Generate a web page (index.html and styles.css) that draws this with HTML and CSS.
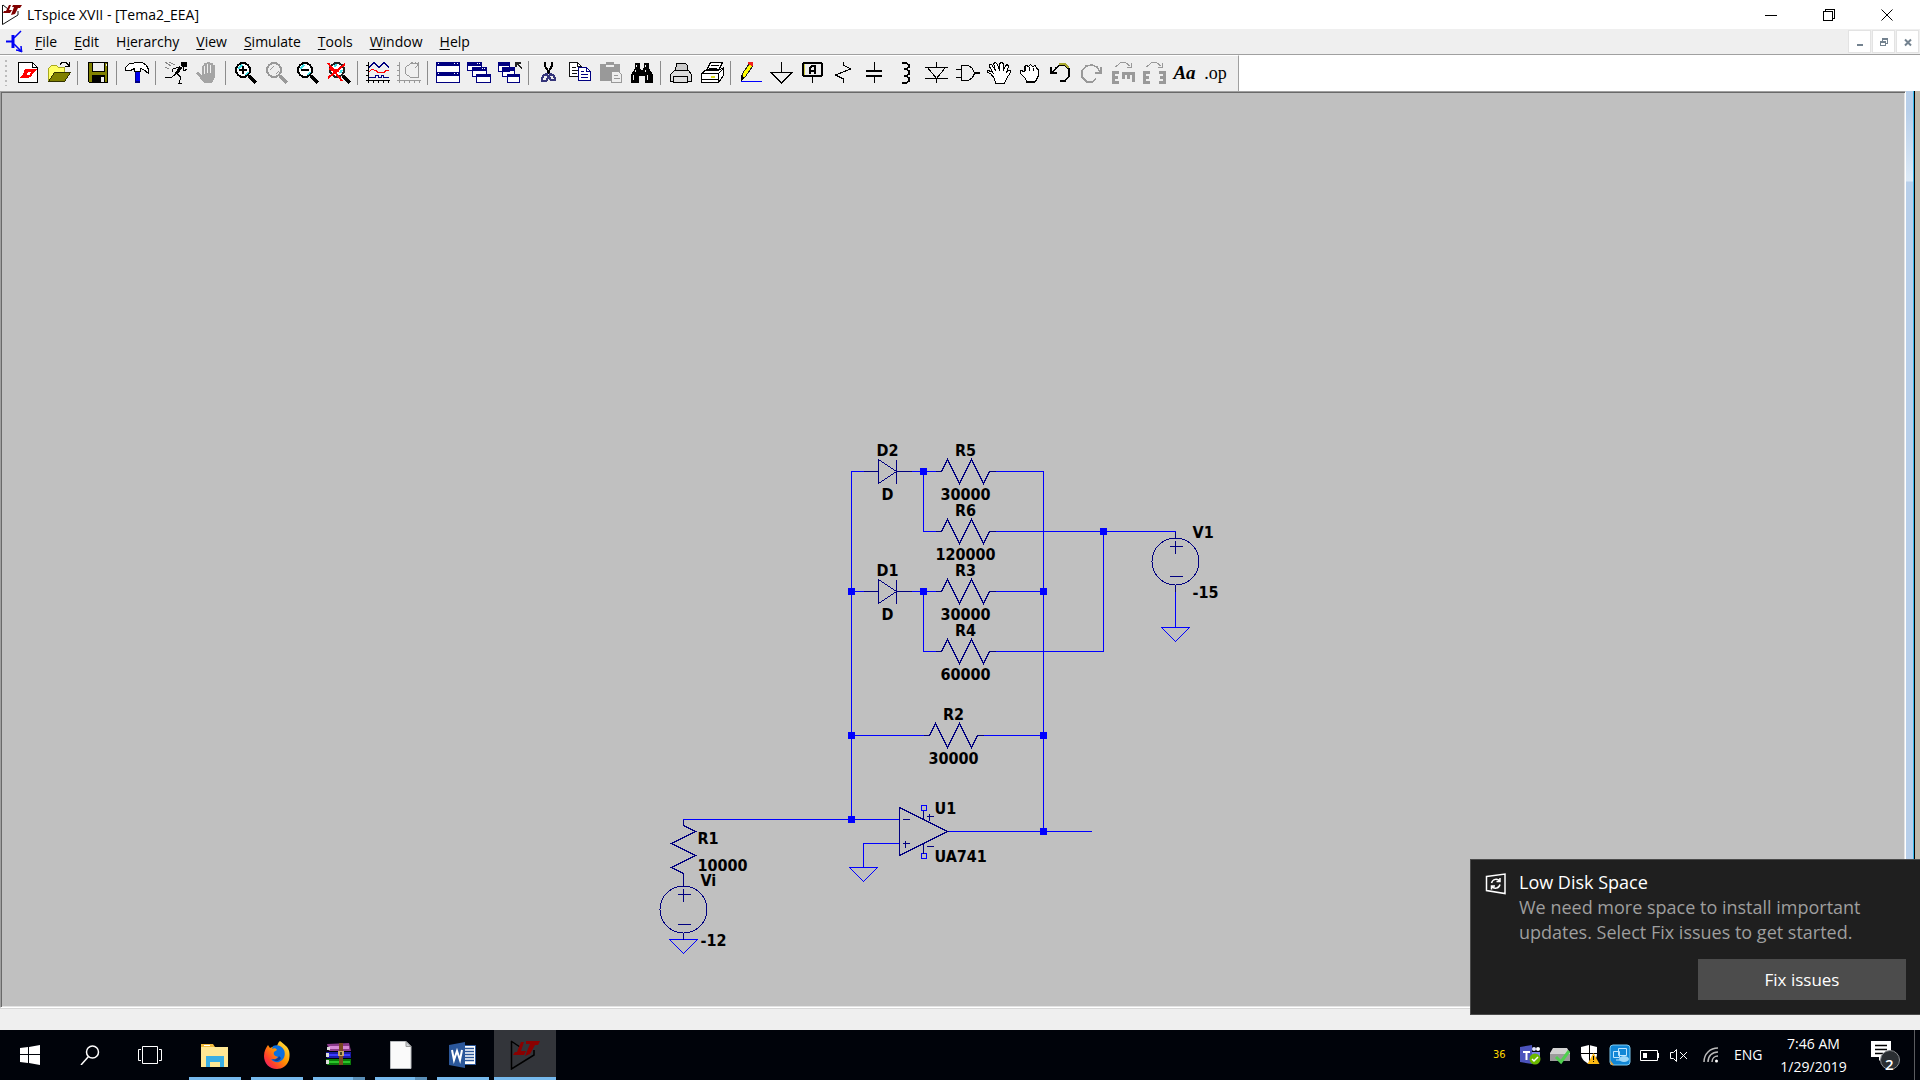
FILE: index.html
```html
<!DOCTYPE html>
<html lang="en">
<head>
<meta charset="utf-8">
<title>LTspice XVII - [Tema2_EEA]</title>
<link rel="stylesheet" href="styles.css">
</head>
<body>
<svg class="defs" aria-hidden="true">
  <defs>
    <g id="resistor"><path d="M0 0h6l6-12 12 24 12-24 12 24 6-12h6"/></g>
    <g id="diode"><path d="M0 0h15M15-12v24L33 0zM33-12v24M33 0h15"/></g>
    <g id="source"><circle cx="0" cy="30" r="23.5"/><path d="M0 0v6M-6 15h13M0 9v13M-6 45h13M0 54v6"/></g>
    <path id="ground" d="M-14 0h28L0 14z"/>
    <rect id="node" x="-3.5" y="-3.5" width="7" height="7"/>
    <g id="ltmark">
      <path fill="#800000" d="M8 1h2L8 6h3l-2 3H2l1-2h2zM12 1h9l-2 3h-2l-3 6-4 1 3-8h-2z"/>
    </g>
  </defs>
</svg>

<div class="app">
  <header class="titlebar">
    <svg class="appicon" width="22" height="22" viewBox="0 0 22 22"><path d="M1.500 1v19.500L17 11V7M2 1l5 4" fill="none" stroke="#111"/><use href="#ltmark"/></svg>
    <h1 class="title">LTspice XVII - [Tema2_EEA]</h1>
    <div class="winbtns">
      <button aria-label="Minimize"><svg width="12" height="12" viewBox="0 0 12 12"><path d="M0 6.500h12"/></svg></button>
      <button aria-label="Restore"><svg width="12" height="12" viewBox="0 0 12 12"><path d="M.5 2.500h9v9h-9zM2.500 2.500v-2h9v9h-2"/></svg></button>
      <button aria-label="Close"><svg width="12" height="12" viewBox="0 0 12 12"><path class="aa" d="M.5.5l11 11M11.500.5l-11 11"/></svg></button>
    </div>
  </header>

  <nav class="menubar">
    <svg class="docicon" width="18" height="24" viewBox="0 0 18 24" fill="none" stroke="#0000f5"><path d="M0 11.500h6" stroke-width="2"/><path d="M7 5v13" stroke-width="3"/><path d="M8 8l7-7M8 14l6 6" stroke-width="1.500"/><path d="M10 20h5v-4l1 6z" fill="#0000f5"/></svg>
    <button><u>F</u>ile</button>
    <button><u>E</u>dit</button>
    <button>H<u>i</u>erarchy</button>
    <button><u>V</u>iew</button>
    <button><u>S</u>imulate</button>
    <button><u>T</u>ools</button>
    <button><u>W</u>indow</button>
    <button><u>H</u>elp</button>
    <div class="mdibtns">
      <button aria-label="Minimize document"><svg width="10" height="10" viewBox="0 0 10 10"><path d="M2 8h6" stroke-width="2"/></svg></button>
      <button aria-label="Restore document"><svg width="10" height="10" viewBox="0 0 10 10"><path d="M3 2h6M1 5h6" stroke-width="2"/><path d="M3.500 1v3M8.500 1v5.500h-2M1.500 4v4.500h5v-4"/></svg></button>
      <button aria-label="Close document"><svg width="10" height="10" viewBox="0 0 10 10"><path class="aa" d="M2 2.500l6 6M8 2.500l-6 6" stroke-width="2"/></svg></button>
    </div>
  </nav>

  <div class="toolrow">
    <div class="toolbar" role="toolbar">
      <span class="grip"></span>
      <button aria-label="New schematic"><svg viewBox="0 0 24 24"><path fill="#fff" stroke="#000" d="M2.500 1.500h14l5 5v15h-19z"/><path fill="none" stroke="#000" d="M16.500 1.500v5h5"/><path fill="#f00" d="M9 8h4l-2 6h4l-3 3H3l3-3h1zM13 8h8l-3 3-4 6-1-1 2-5h-3z"/></svg></button>
      <button aria-label="Open"><svg viewBox="0 0 24 24"><path fill="#ff6" stroke="#a8a820" d="M1.500 20V7.500l3-3h5l2 2h6v5"/><path fill="#808000" stroke="#333300" d="M1.500 20.500l6-9h16l-6 9z"/><path fill="none" stroke="#000" d="M13 3.500l2-2h4l3 3M22.500 1v4.500H18"/></svg></button>
      <span class="sep"></span>
      <button aria-label="Save"><svg viewBox="0 0 24 24"><path fill="#808000" stroke="#000" d="M2.500 1.500h19v20h-18l-1-1z"/><path fill="#efefef" stroke="#000" d="M6.500 1.500h12v9h-12z"/><path fill="#000" d="M6 14h13v8H6z"/><path fill="#efefef" d="M15 16h3v5h-3zM20 3h1v2h-1z"/></svg></button>
      <span class="sep"></span>
      <button aria-label="Control panel"><svg viewBox="0 0 24 24"><path fill="#0000f0" d="M10 9h5v13h-5z"/><path fill="#000080" d="M10 9h1v13h-1zM10 20h5v2h-5z"/><path fill="#fff" stroke="#000" d="M.5 6.500l4-4h3l3-1h7l4 3 2 4v4l-5-4-3-1v3h-6v-3l-4 2h-5z"/></svg></button>
      <span class="sep"></span>
      <button aria-label="Run"><svg viewBox="0 0 24 24" fill="none" stroke="#000"><path fill="#000" d="M17 1h5v4h-4z"/><path stroke-width="3" d="M17 6l-5 7"/><path d="M19 6l1 4 3-2M15 6l-6 2-1 3M12 13l-4 3H1M13 13l4 3-2 6h3"/><path stroke="#888" d="M1 1l6 4M5 1l6 3M1 6l4 2"/></svg></button>
      <button aria-label="Halt"><svg viewBox="0 0 24 24"><path fill="#a4a4a4" d="M1 12l2-1 4 3V5l2-1V2l3 0V1h3v1l3 0v2h2v12l-3 6H9z"/><path stroke="#efefef" d="M9.500 5v8M12.500 3v9M15.500 4v8"/></svg></button>
      <span class="sep"></span>
      <button aria-label="Zoom in"><svg viewBox="0 0 24 24"><circle cx="9" cy="9" r="7" fill="#fff" stroke="#000" stroke-width="2"/><path fill="none" stroke="#3ee0e8" stroke-width="1.500" d="M4 8l4-4M12 14l2-3"/><path fill="none" stroke="#000" stroke-width="2" d="M5 9h8M9 5v8"/><path stroke="#000" stroke-width="3" d="M15 15l7 7"/></svg></button>
      <button aria-label="Pan"><svg viewBox="0 0 24 24"><circle cx="9" cy="9" r="7" fill="#eee" stroke="#999" stroke-width="2"/><path stroke="#999" fill="none" d="M5 9l4-4M11 13l3-3"/><path stroke="#999" stroke-width="3" d="M15 15l7 7"/></svg></button>
      <button aria-label="Zoom out"><svg viewBox="0 0 24 24"><circle cx="9" cy="9" r="7" fill="#fff" stroke="#000" stroke-width="2"/><path fill="none" stroke="#3ee0e8" stroke-width="1.500" d="M4 8l4-4M12 14l2-3"/><path fill="none" stroke="#000" stroke-width="2" d="M5 9h8"/><path stroke="#000" stroke-width="3" d="M15 15l7 7"/></svg></button>
      <button aria-label="Zoom to fit"><svg viewBox="0 0 24 24"><circle cx="10" cy="9" r="7" fill="#fff" stroke="#222" stroke-width="2"/><path fill="none" stroke="#3ee0e8" stroke-width="2" d="M7 5l3-1M13 12l2-3"/><path stroke="#000" stroke-width="3" d="M16 15l7 7"/><path fill="none" stroke="#f00" stroke-width="2" d="M1 2l14 18M18 3L1 17M2 8l10 2"/></svg></button>
      <span class="sep"></span>
      <button aria-label="Waveform"><svg viewBox="0 0 24 24" fill="none" stroke="#000"><path d="M2.500 1v21M0 19.500h24M0 4.500h3M0 9.500h3M0 14.500h3M7.500 19v3M12.500 19v3M17.500 19v3M22.500 19v3"/><path stroke="#000080" d="M3 6.500l5-5 5 5 5-5 5 5M3 16.500h6v-2h3v2h3v-2h2v2h6"/><path stroke="#f00" d="M3 10.500l3-2 4 1 2 2h6l2-2h3"/></svg></button>
      <button aria-label="FFT"><svg class="dim" viewBox="0 0 24 24"><path d="M2.500 1v21M0 19.500h24M0 4.500h3M0 9.500h3M0 14.500h3M7.500 19v3M12.500 19v3M17.500 19v3M22.500 19v3M21.500 1v16M21 2.500h-7l-6 4v6l6 4h7M18 1l3 3-3 3M12 4l4-3"/></svg></button>
      <span class="sep"></span>
      <button aria-label="Tile"><svg viewBox="0 0 24 24"><path fill="#fff" stroke="#000080" d="M.5 1.500h23v10H.5zM.5 12.500h23v9H.5z"/><path fill="#000080" d="M0 1h24v4H0zM0 11h24v4H0z"/><path fill="#fff" d="M2 2h1v1H2zM18 2h1v1h-1zM21 2h1v1h-1zM2 12h1v1H2zM18 12h1v1h-1zM21 12h1v1h-1z"/></svg></button>
      <button aria-label="Cascade"><svg viewBox="0 0 24 24"><g fill="#fff" stroke="#000080"><path d="M.5 1.500h14v8H.5zM5.500 6.500h14v9h-14zM9.500 13.500h14v8h-14z"/></g><path fill="#000080" d="M0 1h15v4H0zM5 6h15v4H5zM9 13h15v3H9z"/><path fill="#fff" d="M10 2h1v1h-1zM12 2h1v1h-1zM15 7h1v1h-1zM17 7h1v1h-1z"/></svg></button>
      <button aria-label="Close all"><svg viewBox="0 0 24 24"><g fill="#fff" stroke="#000080"><path d="M.5 1.500h11v9H.5zM4.500 6.500h12v9h-12zM9.500 13.500h12v8h-12z"/></g><path fill="#000080" d="M0 1h12v4H0zM4 6h13v4H4zM9 13h13v3H9z"/><path fill="none" stroke="#222" stroke-width="1.500" d="M18 6V2h5M19 2l5 6"/></svg></button>
      <span class="sep"></span>
      <button aria-label="Cut"><svg viewBox="0 0 24 24" fill="none"><path stroke="#000" stroke-width="2" d="M8 1v4l5 8M15 1v4l-5 8"/><path stroke="#35357a" stroke-width="2" d="M10 13l-3 1-2 3v3h4l2-3zM13 13l3 1 2 3v2h-4l-2-3z"/></svg></button>
      <button aria-label="Copy"><svg viewBox="0 0 24 24"><path fill="#fff" stroke="#111" d="M1.500 1.500h8l4 4v10h-12z"/><path fill="none" stroke="#111" d="M9.500 1.500v4h4M4 6.500h4M4 9.500h6M4 12.500h5"/><path fill="#fff" stroke="#000080" d="M10.500 6.500h8l4 4v9h-12z"/><path fill="none" stroke="#000080" d="M18.500 6.500v4h4M13 10.500h3M13 13.500h7M13 16.500h7"/></svg></button>
      <button aria-label="Paste"><svg viewBox="0 0 24 24"><path fill="#999" d="M1 3h6V1h8v2h6v17H1z"/><path fill="#eee" d="M7 4h8v2H7z"/><path fill="#eee" stroke="#999" d="M12.500 10.500h7l3 3v8h-10z"/><path stroke="#999" d="M15 14.500h4M15 17.500h6"/></svg></button>
      <button aria-label="Find"><svg viewBox="0 0 24 24"><path d="M5 2h5v4l1 3h2l1-3V2h5v5l4 7v8h-8v-7h-6v7H1v-8l4-7z"/><path fill="#eee" d="M6 4h1v2H6zM15 4h1v2h-1zM5 9h1v2H5zM3 14h1v5H3zM15 9h1v2h-1zM17 14h1v5h-1z"/></svg></button>
      <span class="sep"></span>
      <button aria-label="Print setup"><svg viewBox="0 0 24 24"><path fill="#ccc" stroke="#000" d="M6.500 10l1-7.500h9l2 2v6"/><path fill="#ddd" stroke="#000" d="M1.500 13.500l4-4h14l3 4v7h-4v-5h-14v5h-3zM4.500 15.500h14v6h-14z"/></svg></button>
      <button aria-label="Print"><svg viewBox="0 0 24 24"><path fill="#fff" stroke="#000" d="M6.500 9.500l4-8h12l-4 8zM1.500 12.500l5-4h14l3-2v8l-5 7h-17zM1.500 12.500h17v9M18.500 12.500l5-5M1.500 18.500h17"/><path stroke="#000" d="M11 4.500h8M9 7.500h8"/><path stroke="#dddd20" stroke-width="2" d="M11 16h4"/></svg></button>
      <span class="sep"></span>
      <button aria-label="Draw wire"><svg viewBox="0 0 24 24"><path stroke="#0000ff" d="M2 20.500h21"/><path fill="#ff0" stroke="#222" d="M2.500 18.500l1-6 7-10h3v3l-7 10z"/><path fill="#f02020" d="M9 1h5v4l-4-1z"/><path d="M2 14l3 3-3 3z"/></svg></button>
      <button aria-label="Ground"><svg viewBox="0 0 24 24" fill="none" stroke="#000"><path d="M11.500 1v11M0 11.500h23M1.500 12l10 10 10-10"/></svg></button>
      <button aria-label="Label net"><svg viewBox="0 0 24 24" fill="none" stroke="#000"><path fill="#eee" stroke-width="2" d="M3 2h17l1 1v11l-1 1H3l-1-1V3z"/><path stroke="#cc4" d="M3.500 3v11"/><path stroke-width="2" d="M9 13V7l2-2h3v8M9 10h5"/><path d="M11.500 15v7"/></svg></button>
      <button aria-label="Resistor"><svg viewBox="0 0 24 24" fill="none" stroke="#000"><path d="M11.500 1v3l7 4-15 6 8 4v4"/></svg></button>
      <button aria-label="Capacitor"><svg viewBox="0 0 24 24" fill="none" stroke="#000"><path d="M11.500 1v9M11.500 15v7"/><path stroke-width="2" d="M3 10h16M3 15h16"/></svg></button>
      <button aria-label="Inductor"><svg viewBox="0 0 24 24" fill="none" stroke="#000" stroke-width="1.500"><path d="M8 2h4l3 2v2l-3 2h-2 2l3 2v3l-3 2h-2 2l3 2v3l-3 2H8"/></svg></button>
      <button aria-label="Diode"><svg viewBox="0 0 24 24" fill="none" stroke="#000"><path d="M11.500 1v5M0 6.500h23M2.500 6.500l9 11 9-11M0 17.500h23M11.500 18v4"/></svg></button>
      <button aria-label="Component"><svg viewBox="0 0 24 24" fill="none" stroke="#000"><path d="M5.500 4.500h7l4 3 2 5-2 4-4 3h-7zM0 8.500h5M0 16.500h5"/><path stroke-width="2" d="M18 12h6"/></svg></button>
      <button aria-label="Move"><svg viewBox="0 0 24 24"><path fill="#fff" stroke="#000" d="M7.500 17.500l-4-5-3-1v-2l4 1 2 2-4-7v-2h2l4 6-2-7 2-1 2 2 2 6V2.500l2-1 2 1v7l2-5 2-1 1 2-2 6 2-2h2v2l-4 6-2 5h-9z"/></svg></button>
      <button aria-label="Drag"><svg viewBox="0 0 24 24"><path fill="#fff" stroke="#000" d="M7.500 17.500l-5-5v-3l4 1v-5l2-1 2 1 2-2 2 2 3-1 1 3 2 1v6l-3 6h-9zM7.500 5.500v4M11.500 5.500v4M15.500 6.500v3"/><path fill="#000" d="M8 20h9v2H8z"/></svg></button>
      <button aria-label="Undo"><svg viewBox="0 0 24 24" fill="none" stroke="#000" stroke-width="1.500"><path d="M3 12l4-5 4-3h5l4 4v7l-4 5h-5"/><path stroke="#aaa830" d="M10 3l6 0 4 4"/><path stroke-width="2" d="M2 6v6h6"/></svg></button>
      <button aria-label="Redo"><svg class="dim" viewBox="0 0 24 24" stroke-width="1.500"><path d="M20 11l-3-5-5-2-6 1-4 5v6l5 5h5l4-3"/><path stroke-width="2" d="M21 6v6h-6"/></svg></button>
      <button aria-label="Rotate"><svg class="dim" viewBox="0 0 24 24"><path d="M4.500 6l5-4.500h5l5 4M20.500 2v4h-5"/><path stroke-width="3" d="M2.500 11v11M1 11.500h7M1 16.500h6M1 21.500h7M11 12.500h13M12.500 12v6M17.500 12v6M22.500 12v9"/></svg></button>
      <button aria-label="Mirror"><svg class="dim" viewBox="0 0 24 24"><path d="M4.500 6l5-4.500h5l5 4M20.500 2v4h-5"/><path stroke-width="3" d="M2.500 11v11M1 11.500h7M1 16.500h6M1 21.500h7M22.500 11v11M17 11.500h7M18 16.500h6M17 21.500h7"/></svg></button>
      <button class="txt-aa">Aa</button>
      <button class="txt-op">.op</button>
    </div>
  </div>

  <main class="workspace">
    <svg class="schematic" role="img" aria-label="Schematic Tema2_EEA">
      <g transform="translate(850.5 379.5)">
        <g class="wire">
          <path d="M12 0H0V348M60 0h24M72 0v60h12M144 0h48V360M144 60h180v6M0 120h12M60 120h24M72 120v60h12M144 120h48M144 180h108V60M0 264h72M132 264h60M-168 354v-6H48M48 372H12v24M96 360h144M324 120v36"/>
          <use href="#ground" x="12" y="396"/>
          <use href="#ground" x="324" y="156"/>
          <use href="#ground" x="-168" y="468"/>
          <path d="M70 334h5v5h-5zM70 382h5v5h-5z"/>
        </g>
        <g class="symbol">
          <use href="#diode" x="12" y="0"/>
          <use href="#diode" x="12" y="120"/>
          <use href="#resistor" x="84" y="0"/>
          <use href="#resistor" x="84" y="60"/>
          <use href="#resistor" x="84" y="120"/>
          <use href="#resistor" x="84" y="180"/>
          <use href="#resistor" x="72" y="264"/>
          <path d="M-168 348v6l12 6-24 12 24 12-24 12 12 6v6"/>
          <use href="#source" x="324" y="60"/>
          <use href="#source" x="-168" y="408"/>
          <path d="M48 336v48l48-24zM51 348h7M51 372h7M54 369v7M72 339v9M75 345h7M78 342v7M72 372v10M75 375h7"/>
        </g>
        <g class="nodes">
          <use href="#node" x="72" y="0"/><use href="#node" x="0" y="120"/><use href="#node" x="72" y="120"/>
          <use href="#node" x="192" y="120"/><use href="#node" x="252" y="60"/><use href="#node" x="0" y="264"/>
          <use href="#node" x="192" y="264"/><use href="#node" x="0" y="348"/><use href="#node" x="192" y="360"/>
        </g>
        <g class="labels mid">
          <text x="36" y="-16">D2</text><text x="36" y="28">D</text>
          <text x="114" y="-16">R5</text><text x="114" y="28">30000</text>
          <text x="114" y="44">R6</text><text x="114" y="88">120000</text>
          <text x="36" y="104">D1</text><text x="36" y="148">D</text>
          <text x="114" y="104">R3</text><text x="114" y="148">30000</text>
          <text x="114" y="164">R4</text><text x="114" y="208">60000</text>
          <text x="102" y="248">R2</text><text x="102" y="292">30000</text>
        </g>
        <g class="labels">
          <text x="341" y="66">V1</text><text x="341" y="126">-15</text>
          <text x="83" y="342">U1</text><text x="83" y="390">UA741</text>
          <text x="-154" y="372">R1</text><text x="-154" y="399">10000</text>
          <text x="-151" y="414">Vi</text><text x="-151" y="474">-12</text>
        </g>
      </g>
    </svg>
    <div class="edge"></div>
  </main>
  <footer class="statusbar"></footer>
</div>

<section class="toast">
  <svg class="toasticon" width="22" height="22" viewBox="0 0 22 22" fill="none" stroke="#fff" stroke-width="1.500"><path d="M1.500 3.500L20 1v19.500L1.500 17.500z"/><path d="M6.500 10c1-4 6-5 8-2M15 5v3.500h-3.500M15 11.500c-1 4-6 5-8 2M6.500 16.500V13H10"/></svg>
  <div class="toastbody">
    <h2>Low Disk Space</h2>
    <p>We need more space to install important updates. Select Fix issues to get started.</p>
  </div>
  <button class="fix">Fix issues</button>
</section>

<div class="taskbar">
  <button class="start" aria-label="Start"><svg width="20" height="20" viewBox="0 0 20 20" fill="#fff"><path d="M0 3l8-1v7H0zM9 2l11-2v9H9zM0 10h8v8l-8-1zM9 10h11v10L9 18z"/></svg></button>
  <button class="search" aria-label="Search"><svg width="20" height="20" viewBox="0 0 20 20" fill="none" stroke="#fff" stroke-width="1.500"><circle cx="12.500" cy="7" r="6"/><path d="M8.500 11.500L1 20"/></svg></button>
  <button class="taskview" aria-label="Task view"><svg width="24" height="20" viewBox="0 0 24 20" fill="none" stroke="#fff"><path d="M4.500 1.500h15v17h-15zM3 4.500H.5v11H3M21 4.500h2.500v11H21"/></svg></button>
  <div class="apps">
    <button class="run" aria-label="File Explorer"><svg width="28" height="28" viewBox="0 0 28 28"><path fill="#f2bb3c" d="M0 3h12l2 3h13v20H0z"/><path fill="#ffe794" d="M0 6h27v20H0z"/><path fill="#fff" d="M3 4h6v1H3z"/><path fill="#3aaee4" d="M5 15h18v11h-4v-5H9v5H5z"/></svg></button>
    <button class="run" aria-label="Firefox"><svg width="28" height="28" viewBox="0 0 28 28"><defs><linearGradient id="fx" x1="1" y1="0" x2="0" y2="1"><stop offset="0" stop-color="#fff44f"/><stop offset=".45" stop-color="#ff9500"/><stop offset=".75" stop-color="#ff3b30"/><stop offset="1" stop-color="#e3128a"/></linearGradient></defs><path fill="url(#fx)" d="M17 0c4 3 5 4 7 6 3 4 3 8 2 13-2 6-7 9-12 9C6 28 1 22 1 15 1 10 3 7 5 4l2 3c3-2 5-1 7-2 1-2 1-4 3-5z"/><path fill="#0a6fe0" d="M10 5c4-2 9 0 11 4 2 5 0 10-5 12-3 1-7-1-8-3 3 1 5 0 7-2-3-1-5-2-4-5 1-1 2-1 3-2-1-2-3-2-5-1z"/><path fill="#173a8c" d="M9 18c3 1 6 0 7-3l2 2c-2 4-6 4-9 1z"/></svg></button>
    <button class="run multi" aria-label="WinRAR"><svg width="28" height="28" viewBox="0 0 28 28"><path fill="#8c3c8c" d="M2 3l22-1 2 8H4z"/><path fill="#d68ad6" d="M4 5h20v3H5z"/><path fill="#1b1ba8" d="M1 11h25v6H2z"/><path fill="#3c3cff" d="M4 13h21v2H4z"/><path fill="#0a7a0a" d="M1 18h25v6H2z"/><path fill="#2cc42c" d="M4 20h21v2H4z"/><path fill="#ddd" d="M2 6h3v3H2zM1 12h3v4H1zM1 19h3v4H1z"/><path fill="#7a4a22" d="M14 2h4v22h-4z"/><path fill="#caa56a" d="M13 10h6v5h-6z"/><path fill="#442" d="M15 11h2v3h-2z"/></svg></button>
    <button class="run multi" aria-label="Document"><svg width="28" height="28" viewBox="0 0 28 28"><path fill="#fafafa" stroke="#b9bcbf" d="M3.500.5H19l5 5v22H3.500z"/><path fill="#cfd3d6" stroke="#999" d="M19 .5v5h5z"/></svg></button>
    <button class="run" aria-label="Word"><svg width="28" height="28" viewBox="0 0 28 28"><path fill="#fff" stroke="#2b579a" d="M14.500 4.500h12v19h-12z"/><path stroke="#2b579a" stroke-width="1.500" d="M16 7.500h9M16 10.500h9M16 13.500h9M16 16.500h9M16 19.500h9"/><path fill="#2b579a" d="M0 4l16-3v26L0 24z"/><path fill="none" stroke="#fff" stroke-width="2" d="M3 9l2 10 3-9 3 9 2-10"/></svg></button>
    <button class="run active" aria-label="LTspice XVII"><svg width="30" height="30" viewBox="0 0 30 30"><path d="M1.500 1v28L24 15v-5M1 1l9 6" fill="none" stroke="#000" stroke-width="1.500"/><path fill="#8b0000" d="M11 2h3l-3 9h5l-2 4H3l2-3h2zM16 1h14l-2 4h-3l-5 9-5 2 5-12h-4z"/></svg></button>
  </div>
  <div class="tray">
    <span class="temp">36</span>
    <svg width="22" height="22" viewBox="0 0 22 22"><path fill="#4b53bc" d="M1 3l12-2v19L1 18z"/><path fill="#fff" d="M4 7h7v2H8.500v7h-2V9H4z"/><circle cx="15" cy="5" r="2" fill="#dfe1ff"/><circle cx="19" cy="5" r="2" fill="#fff"/><path fill="#7b83eb" d="M13 8h8v6h-8z"/><circle cx="16" cy="15" r="5.500" fill="#6bb700"/><path d="M13 15l2 2 4-4" fill="none" stroke="#fff" stroke-width="1.500"/></svg>
    <svg width="22" height="22" viewBox="0 0 22 22"><path fill="#d2d2d2" d="M4 4h14l3 5v3H1V9z"/><path fill="#9b9b9b" d="M1 10h20v7H1z"/><path d="M7 13l5 5 8-11" fill="none" stroke="#4fd04f" stroke-width="3"/></svg>
    <svg width="22" height="22" viewBox="0 0 22 22"><path fill="#fff" d="M2 3l8-2 8 2v7c0 5-4 8-8 10-4-2-8-5-8-10z"/><path stroke="#000" d="M10.500 1v19M2 9.500h16"/><path fill="#fdb913" d="M14.500 9l6 11h-12z"/><path fill="#000" d="M14 12h1v4h-1zM14 17h1v1h-1z"/></svg>
    <svg width="22" height="22" viewBox="0 0 22 22"><rect x="1" y="1" width="20" height="20" rx="3" fill="#1287d6" stroke="#7ccaf0"/><path fill="none" stroke="#bfe6ff" d="M4.500 7.500h6v6h-6zM9.500 4.500h8v7h-8zM12 15h6M7 16h4"/><ellipse cx="15" cy="15" rx="5" ry="3" fill="#9fd8f8"/><path fill="#e0a040" d="M1 16l4 5H2z"/></svg>
    <svg width="22" height="22" viewBox="0 0 22 22"><path fill="none" stroke="#fff" d="M1.500 6.500h17v10h-17zM19.500 9v5"/><path fill="#fff" d="M4 9h4v5H4z"/></svg>
    <svg width="22" height="22" viewBox="0 0 22 22" fill="none" stroke="#fff"><path d="M1.500 8.500h3l3-3v12l-3-3h-3zM11 8l7 7M18 8l-7 7"/></svg>
    <svg class="wifi" width="22" height="22" viewBox="0 0 22 22" fill="none" stroke="#bbb" stroke-width="1.500"><path d="M3 18C3 10 9 4 17 4M7 18c0-6 4-10 10-10M11 18c0-4 3-6 6-6"/><circle cx="15.500" cy="17" r="1.500" fill="#fff" stroke="none"/></svg>
    <span class="lang">ENG</span>
    <time class="clock">7:46 AM<br>1/29/2019</time>
    <button class="action" aria-label="Notifications"><svg width="32" height="32" viewBox="0 0 32 32"><path fill="#fff" d="M1 2h20v16h-8l-4 4v-4H1z"/><path stroke="#000" stroke-width="1.500" d="M5 6.500h12M5 10.500h12M5 14.500h8"/><circle cx="20" cy="21" r="9.500" fill="#2b2f33" stroke="#8a8d90"/></svg><span class="badge">2</span></button>
    <span class="peek"></span>
  </div>
</div>
</body>
</html>
```

FILE: styles.css
```css
* { box-sizing: border-box; }

html, body { height: 100%; margin: 0; }

body {
  display: flex;
  flex-direction: column;
  position: relative;
  overflow: hidden;
  background: #efefef;
  color: #000;
  font: 14px/20px "Open Sans", "Noto Sans", sans-serif;
}

button {
  display: flex;
  align-items: center;
  justify-content: center;
  margin: 0;
  padding: 0;
  border: 0;
  background: none;
  color: inherit;
  font: inherit;
}

svg { display: block; flex: none; }
.defs { position: absolute; width: 0; height: 0; }

.app { flex: 1; min-height: 0; display: flex; flex-direction: column; }

/* Title bar */
.titlebar { display: flex; align-items: center; height: 29px; background: #fff; }
.appicon { margin-left: 1px; }
.title { flex: 1; margin: 0 0 0 4px; font-size: 14px; font-weight: 400; }
.winbtns { display: flex; margin-right: 4px; }
.winbtns button { width: 58px; height: 28px; }
.winbtns svg { fill: none; stroke: #000; shape-rendering: crispEdges; }
.winbtns .aa, .mdibtns .aa { shape-rendering: auto; }

/* Menu bar */
.menubar { display: flex; align-items: center; gap: 1px; height: 26px; border-bottom: 1px solid #a0a0a0; }
.docicon { margin: 0 2px 0 6px; }
.menubar > button { height: 25px; padding: 0 8px; }
.menubar u { text-decoration-thickness: 1px; text-underline-offset: 2px; }
.mdibtns { display: flex; gap: 1px; margin-left: auto; padding-right: 1px; }
.mdibtns button { width: 23px; height: 23px; border: 1px solid #e3e3e3; background: #fff; }
.mdibtns svg { fill: none; stroke: #73828f; shape-rendering: crispEdges; }

/* Toolbar */
.toolrow { display: flex; height: 36px; background: #fff; }
.toolbar {
  display: flex;
  align-items: center;
  padding: 0 7px 1px 0;
  border-top: 1px solid #fff;
  border-right: 1px solid #a0a0a0;
  background: #efefef;
}
.toolbar button { width: 31px; height: 30px; }
.toolbar svg { width: 24px; height: 24px; shape-rendering: crispEdges; }
.toolbar .dim { fill: none; stroke: #999; }
.grip {
  width: 2px;
  height: 26px;
  margin: 0 5px 0 5px;
  background: repeating-linear-gradient(#bbb 0 2px, #efefef 2px 5px);
}
.sep { width: 1px; height: 24px; margin: 0 4px 0 3px; background: #8c8c8c; }
.toolbar .txt-aa { font: italic bold 19px/24px "Liberation Serif", serif; }
.toolbar .txt-op { font: 18px/24px "Liberation Serif", serif; }

/* Schematic */
.workspace { flex: 1; min-height: 0; display: flex; }
.schematic {
  flex: 1;
  min-width: 0;
  height: 100%;
  border-top: 1px solid #a0a0a0;
  border-left: 1px solid #a0a0a0;
  border-bottom: 1px solid #fff;
  border-right: 1px solid #fff;
  box-shadow: inset 1px 1px #696969, inset -1px -1px #e3e3e3;
  background: #c0c0c0;
  shape-rendering: crispEdges;
}
.wire { fill: none; stroke: #0000ff; }
.symbol { fill: none; stroke: #000080; }
.nodes { fill: #0000ff; }
.labels { font: bold 16px "DejaVu Sans Condensed", "DejaVu Sans", sans-serif; }
.mid { text-anchor: middle; }

.edge {
  width: 14px;
  border-right: 5px solid #bfb9ab;
  background:
    linear-gradient(90deg, transparent 0 7px, #35b6e8 7px 8px, #000 8px),
    linear-gradient(#b8cfea 0 20px, #dce9f6 88px 90px, #b8cfea 91px);
}

.statusbar { height: 22px; border-top: 1px solid #d7d7d7; background: #efefef; }

/* Notification */
.toast {
  position: absolute;
  right: 0;
  bottom: 65px;
  display: grid;
  grid-template-columns: 22px 1fr;
  column-gap: 12px;
  width: 450px;
  padding: 10px 14px 14px;
  border: 1px solid #4a4a4a;
  border-right: 0;
  background: #1f1f1f;
  color: #fff;
  font-size: 17px;
  line-height: 25px;
}
.toasticon { margin-top: 3px; }
.toast h2, .toast p { margin: 0; font-size: 18px; font-weight: 400; }
.toast p { color: #9e9e9e; }
.fix { grid-column: 2; justify-self: end; width: 208px; height: 41px; margin-top: 14px; background: #4c4c4c; }

/* Taskbar */
.taskbar { display: flex; height: 50px; background: #00030a; color: #fff; }
.start, .search, .taskview { width: 60px; }
.apps { display: flex; margin-left: 4px; }
.run { width: 62px; border: 5px solid transparent; border-width: 0 5px; background: linear-gradient(#76b9ed, #76b9ed) bottom / 100% 3px no-repeat content-box; }
.multi { background: linear-gradient(90deg, #76b9ed 0 40px, #5a8fb8 40px) bottom / 100% 3px no-repeat content-box; }
.active { border: 0; background: linear-gradient(#76b9ed, #76b9ed) bottom / 100% 3px no-repeat #33353a; }

.tray { display: flex; align-items: center; margin-left: auto; }
.tray > svg { margin-right: 8px; }
.temp { width: 12px; margin-right: 14px; color: #ffd800; font: 11px/20px "DejaVu Sans Condensed", sans-serif; }
.tray > .wifi { margin: 0 11px 0 2px; }
.lang { width: 29px; font-size: 14px; }
.clock { width: 101px; text-align: center; font-size: 14px; line-height: 23px; }
.action { position: relative; width: 34px; height: 50px; margin-left: 5px; }
.badge { position: absolute; left: 16px; top: 24px; font-size: 15px; font-weight: 600; }
.peek { width: 1px; height: 50px; margin: 0 5px 0 11px; background: #5a5c60; }
```
